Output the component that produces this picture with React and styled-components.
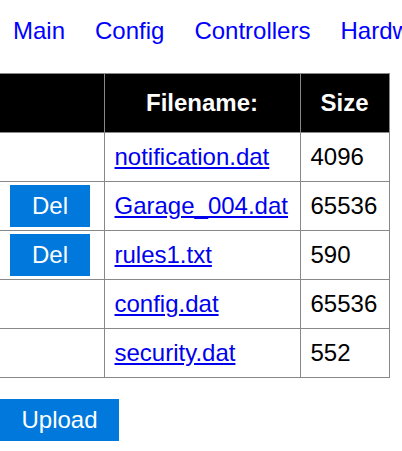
import React from "react"
import styled, { createGlobalStyle } from "styled-components"

const Global = createGlobalStyle`
  html, body {
    margin: 0;
    padding: 0;
    background: #fff;
    overflow: hidden;
  }
  body {
    font-family: "Liberation Sans", Arial, sans-serif;
    font-size: 24px;
    color: #000;
  }
`;

const Nav = styled.nav`
  display: flex;
  gap: 30px;
  padding: 17px 0 0 13px;
  line-height: 28px;
  white-space: nowrap;
  overflow: hidden;
`;

const NavLink = styled.a`
  color: #0000ff;
  text-decoration: none;
  font-size: 24px;
`;

const Table = styled.table`
  margin-top: 28px;
  border-collapse: collapse;
  table-layout: fixed;
  width: 389px;
`;

const Th = styled.th`
  background: #000;
  color: #fff;
  font-weight: bold;
  height: 58px;
  padding: 0 4px;
  border: 1px solid #888;
  text-align: center;
  &:first-child { border-left: 0; }
`;

const Td = styled.td`
  height: 48px;
  padding: 0 10px;
  border: 1px solid #888;
  text-align: left;
  white-space: nowrap;
  &:first-child { border-left: 0; }
`;

const FileLink = styled.a`
  color: #0000ee;
  text-decoration: underline;
`;

const Button = styled.button`
  display: inline-block;
  background: #0078dc;
  color: #fff;
  border: 0;
  border-radius: 0;
  font-family: inherit;
  font-size: 24px;
  height: 42px;
  padding: 0 ${p => p.$pad}px;
  cursor: pointer;
  vertical-align: middle;
`;

const Footer = styled.div`
  margin-top: 21px;
  display: flex;
`;

const files = [
  { name: "notification.dat", size: 4096, del: false },
  { name: "Garage_004.dat", size: 65536, del: true },
  { name: "rules1.txt", size: 590, del: true },
  { name: "config.dat", size: 65536, del: false },
  { name: "security.dat", size: 552, del: false },
]

const App = () => {
  return (<>
    <Global />
    <Nav>
      <NavLink href="#">Main</NavLink>
      <NavLink href="#">Config</NavLink>
      <NavLink href="#">Controllers</NavLink>
      <NavLink href="#">Hardware</NavLink>
    </Nav>
    <Table>
      <colgroup>
        <col style={{ width: 104 }} />
        <col style={{ width: 196 }} />
        <col style={{ width: 89 }} />
      </colgroup>
      <thead>
        <tr>
          <Th></Th>
          <Th>Filename:</Th>
          <Th>Size</Th>
        </tr>
      </thead>
      <tbody>
        { files.map(f => (
          <tr key={f.name}>
            <Td>{ f.del && <Button $pad={22}>Del</Button> }</Td>
            <Td><FileLink href="#">{f.name}</FileLink></Td>
            <Td>{f.size}</Td>
          </tr>
        )) }
      </tbody>
    </Table>
    <Footer>
      <Button $pad={21.5}>Upload</Button>
    </Footer>
  </>)
}

export default App
